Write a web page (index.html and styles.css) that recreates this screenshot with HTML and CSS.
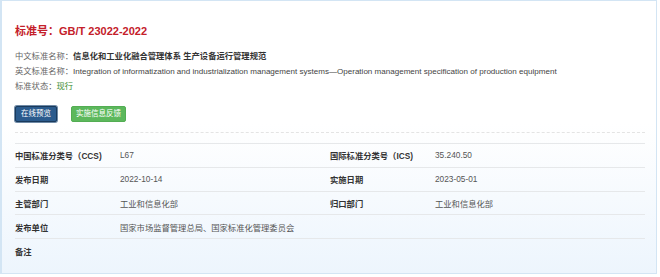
FILE: index.html
```html
<!DOCTYPE html>
<html lang="zh-CN">
<head>
    <meta charset="UTF-8">
    <title>GB/T 23022-2022</title>
    <link rel="stylesheet" href="styles.css">
</head>
<body>
    <div class="card">
        <h1 class="std-no">标准号：GB/T 23022-2022</h1>

        <div class="info">
            <p>中文标准名称：<b>信息化和工业化融合管理体系 生产设备运行管理规范</b></p>
            <p>英文标准名称：<span class="en">Integration of informatization and industrialization management systems—Operation management specification of production equipment</span></p>
            <p>标准状态：<span class="status">现行</span></p>
        </div>

        <div class="actions">
            <button class="btn btn-preview">在线预览</button>
            <button class="btn btn-feedback">实施信息反馈</button>
        </div>

        <table class="detail">
            <tr>
                <th>中国标准分类号（CCS)</th>
                <td class="v1">L67</td>
                <th>国际标准分类号（ICS)</th>
                <td>35.240.50</td>
            </tr>
            <tr>
                <th>发布日期</th>
                <td class="v1">2022-10-14</td>
                <th>实施日期</th>
                <td>2023-05-01</td>
            </tr>
            <tr>
                <th>主管部门</th>
                <td class="v1">工业和信息化部</td>
                <th>归口部门</th>
                <td>工业和信息化部</td>
            </tr>
            <tr>
                <th>发布单位</th>
                <td class="v1" colspan="3">国家市场监督管理总局、国家标准化管理委员会</td>
            </tr>
            <tr>
                <th>备注</th>
                <td colspan="3"></td>
            </tr>
        </table>
    </div>
</body>
</html>
```

FILE: styles.css
```css
body {
    margin: 0;
    font-family: "Liberation Sans", "Noto Sans CJK SC", sans-serif;
    background: #ffffff;
    color: #333;
}

.card {
    width: 657px;
    height: 274px;
    border: 1px solid #d3e5f4;
    border-left-width: 2px;
    background: linear-gradient(to bottom, #ffffff 0%, #ffffff 45%, #edf5fd 100%);
    padding: 0 13px;
    box-sizing: border-box;
}

.std-no {
    margin: 0;
    padding-top: 22px;
    font-size: 11px;
    line-height: 16px;
    font-weight: bold;
    color: #c4202a;
}

.info {
    margin-top: 10px;
}

.info p {
    margin: 0;
    font-size: 8.3px;
    line-height: 15px;
    color: #666;
}

.info b {
    color: #333;
}

.info .en {
    font-size: 8.05px;
    color: #444;
}

.info .status {
    color: #3c8c2e;
}

.actions {
    display: flex;
    gap: 14px;
    margin-top: 12px;
    padding-bottom: 10px;
    border-bottom: 1px dashed #e4e4e4;
    width: 630px;
}

.btn {
    font-family: inherit;
    font-size: 7.5px;
    line-height: 14px;
    height: 16px;
    padding: 0 4px;
    border-radius: 2px;
    color: #fff;
    cursor: pointer;
}

.btn-preview {
    padding: 0 5px;
    background: #2b5b8d;
    border: 1px solid #1a3a5c;
    box-shadow: 0 0 0 1px #6f8aa6;
}

.btn-feedback {
    background: #5cb85c;
    border: 1px solid #53ad53;
}

.detail {
    width: 630px;
    margin-top: 10px;
    border-collapse: collapse;
    font-size: 8.3px;
}

.detail tr {
    border-top: 1px solid #e6e8ea;
}

.detail th,
.detail td {
    height: 22.8px;
    padding: 0;
    text-align: left;
    vertical-align: middle;
}

.detail th {
    width: 105px;
    font-weight: bold;
    color: #333;
}

.detail td {
    color: #555;
}

.detail td.v1 {
    width: 210px;
}
```
